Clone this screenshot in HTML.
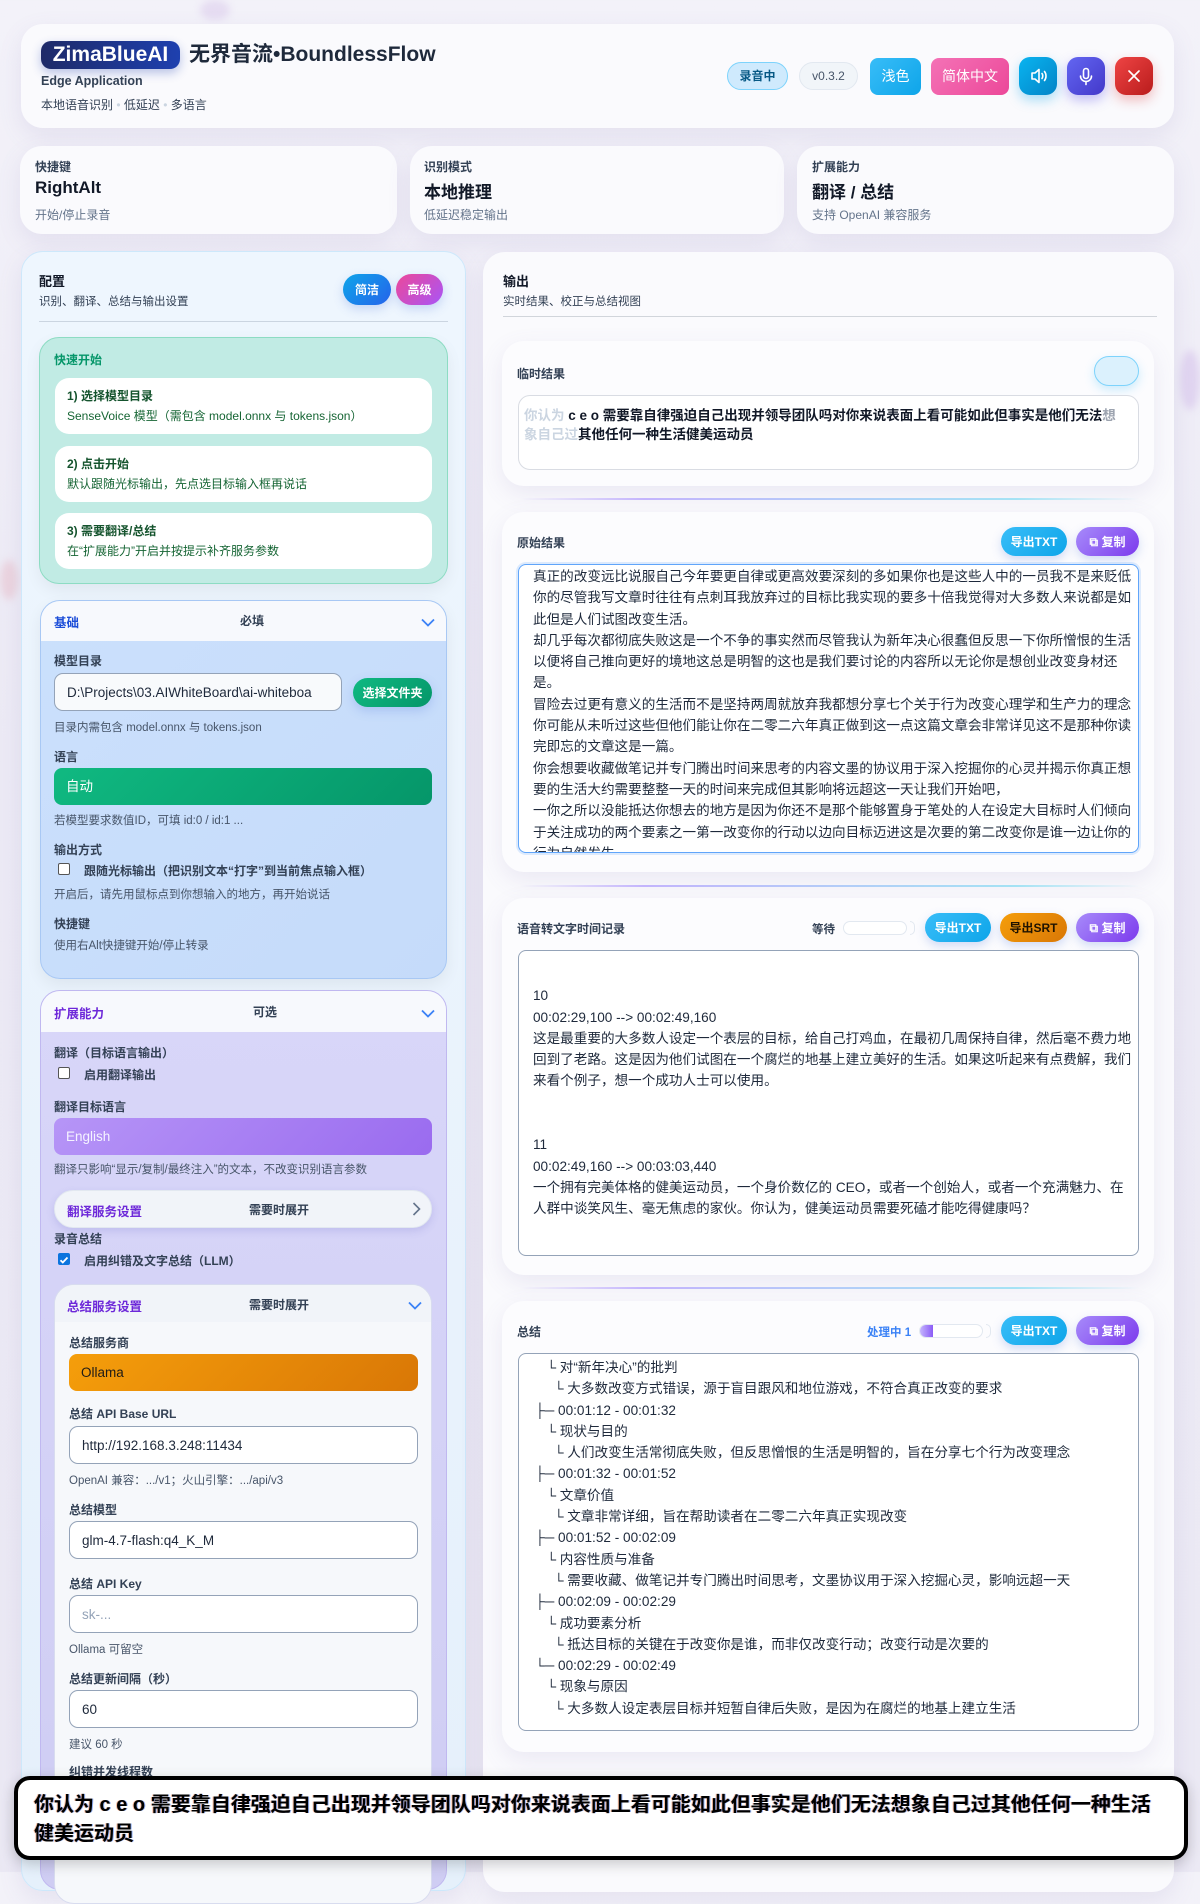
<!DOCTYPE html>
<html><head><meta charset="utf-8"><style>
*{box-sizing:border-box;margin:0;padding:0}
body{width:1200px;height:1872px;overflow:hidden;position:relative;font-family:"Liberation Sans","Noto Sans CJK SC",sans-serif;color:#1e293b;background:linear-gradient(180deg,#f3f2f9 0%,#eceaf5 40%,#ebe9f4 100%)}
.a{position:absolute}
.card{position:absolute;background:rgba(250,250,253,.95);border-radius:22px;box-shadow:0 8px 24px rgba(120,110,170,.12)}
.lbl{position:absolute;font-size:12px;font-weight:bold;color:#334155}
.hint{position:absolute;font-size:11.5px;color:#475569}
.btn{position:absolute;border-radius:999px;color:#fff;font-size:12px;font-weight:bold;display:flex;align-items:center;justify-content:center;box-shadow:0 4px 10px rgba(80,120,220,.25)}
.inp{position:absolute;background:#f8fafc;border:1px solid #94a3b8;border-radius:9px;font-size:13.5px;color:#1e293b;padding-left:12px;display:flex;align-items:center;white-space:nowrap;overflow:hidden}
.ta{position:absolute;background:#fff;border:1px solid #94a3b8;border-radius:8px;font-size:13.6px;line-height:21.3px;color:#1e293b;white-space:pre;overflow:hidden}
.chev{position:absolute;width:14px;height:9px}
</style></head><body>
<div class="a" style="left:200px;top:0;width:30px;height:20px;border-radius:50%;background:#d8c6ea;opacity:.5;filter:blur(4px)"></div>
<div class="a" style="left:1180px;top:350px;width:20px;height:60px;border-radius:50%;background:#d7c4ec;opacity:.6;filter:blur(4px)"></div>
<div class="a" style="left:0;top:560px;width:18px;height:40px;border-radius:50%;background:#e8bcc8;opacity:.5;filter:blur(4px)"></div>

<div class="card" style="left:21px;top:24px;width:1153px;height:104px"></div>
<div class="a" style="left:41px;top:41px;width:139px;height:28px;border-radius:10px;background:linear-gradient(90deg,#1e2a68,#1e40af);box-shadow:0 4px 10px rgba(30,64,175,.3);color:#fff;font-size:21px;font-weight:bold;line-height:28px;text-align:center">ZimaBlueAI</div>
<div class="a" style="left:189px;top:41px;font-size:21px;font-weight:bold;line-height:28px;color:#1e293b">无界音流•BoundlessFlow</div>
<div class="a" style="left:41px;top:74px;font-size:12.5px;font-weight:bold;color:#334155">Edge Application</div>
<div class="a" style="left:41px;top:96px;font-size:12px;color:#334155">本地语音识别 <span style="color:#cbd5e1">•</span> 低延迟 <span style="color:#cbd5e1">•</span> 多语言</div>
<div class="a" style="left:727px;top:62px;width:61px;height:28px;border-radius:14px;background:#cfeafd;border:1px solid #7dd3fc;color:#075985;font-size:12px;font-weight:bold;text-align:center;line-height:26px">录音中</div>
<div class="a" style="left:799px;top:62px;width:59px;height:28px;border-radius:14px;background:#f1f5f9;border:1px solid #e2e8f0;color:#475569;font-size:12px;text-align:center;line-height:26px">v0.3.2</div>
<div class="a" style="left:870px;top:58px;width:51px;height:37px;border-radius:8px;background:linear-gradient(135deg,#38bdf8,#0ea5e9);color:#fff;font-size:14px;text-align:center;line-height:37px">浅色</div>
<div class="a" style="left:931px;top:58px;width:78px;height:37px;border-radius:8px;background:linear-gradient(135deg,#f472b6,#ec4899);color:#fff;font-size:14px;text-align:center;line-height:37px">简体中文</div>
<div class="a" style="left:1019px;top:57px;width:38px;height:38px;border-radius:11px;background:linear-gradient(135deg,#0ab4f0,#0284c7);box-shadow:0 5px 12px rgba(14,165,233,.35)"><svg width="38" height="38" viewBox="0 0 38 38" fill="none" stroke="#fff" stroke-width="1.6" stroke-linejoin="round" stroke-linecap="round"><path d="M13 16h3l4-3.5v13L16 22h-3z"/><path d="M23 16.5c1 1.3 1 3.7 0 5"/><path d="M25.5 14.5c2 2.5 2 6.5 0 9"/></svg></div>
<div class="a" style="left:1067px;top:57px;width:38px;height:38px;border-radius:11px;background:linear-gradient(135deg,#6366f1,#4338ca);box-shadow:0 5px 12px rgba(79,70,229,.35)"><svg width="38" height="38" viewBox="0 0 38 38" fill="none" stroke="#fff" stroke-width="1.6" stroke-linecap="round"><rect x="16.5" y="11.5" width="5" height="10" rx="2.5"/><path d="M13.5 19c0 3.2 2.5 5.5 5.5 5.5s5.5-2.3 5.5-5.5"/><path d="M19 24.5v3"/></svg></div>
<div class="a" style="left:1115px;top:57px;width:38px;height:38px;border-radius:11px;background:linear-gradient(135deg,#ef4444,#b91c1c);box-shadow:0 5px 12px rgba(220,38,38,.3)"><svg width="38" height="38" viewBox="0 0 38 38" stroke="#fff" stroke-width="1.7" stroke-linecap="round"><path d="M14 14l10 10M24 14l-10 10"/></svg></div>

<div class="card" style="left:20px;top:146px;width:377px;height:88px"></div>
<div class="card" style="left:410px;top:146px;width:374px;height:88px"></div>
<div class="card" style="left:797px;top:146px;width:377px;height:88px"></div>
<div class="a" style="left:35px;top:158px;font-size:12px;font-weight:bold;color:#334155">快捷键</div>
<div class="a" style="left:35px;top:178px;font-size:17px;font-weight:bold;color:#111827">RightAlt</div>
<div class="a" style="left:35px;top:206px;font-size:12px;color:#64748b">开始/停止录音</div>
<div class="a" style="left:424px;top:158px;font-size:12px;font-weight:bold;color:#334155">识别模式</div>
<div class="a" style="left:424px;top:178px;font-size:17px;font-weight:bold;color:#111827">本地推理</div>
<div class="a" style="left:424px;top:206px;font-size:12px;color:#64748b">低延迟稳定输出</div>
<div class="a" style="left:812px;top:158px;font-size:12px;font-weight:bold;color:#334155">扩展能力</div>
<div class="a" style="left:812px;top:178px;font-size:17px;font-weight:bold;color:#111827">翻译 / 总结</div>
<div class="a" style="left:812px;top:206px;font-size:12px;color:#64748b">支持 OpenAI 兼容服务</div>

<div class="a" style="left:21px;top:251px;width:445px;height:1640px;border-radius:22px;background:linear-gradient(180deg,#eef6fe,#e5f0fb);border:1px solid #cde8fb;box-shadow:0 8px 24px rgba(120,110,170,.12)"></div>
<div class="a" style="left:39px;top:271px;font-size:13px;font-weight:bold;color:#111827">配置</div>
<div class="a" style="left:39px;top:293px;font-size:11.5px;color:#334155">识别、翻译、总结与输出设置</div>
<div class="btn" style="left:343px;top:274px;width:48px;height:31px;background:linear-gradient(135deg,#0ea5e9,#2563eb)">简洁</div>
<div class="btn" style="left:396px;top:274px;width:47px;height:31px;background:linear-gradient(135deg,#ec4899,#a855f7)">高级</div>
<div class="a" style="left:39px;top:321px;width:409px;height:1px;background:#cbd5e1"></div>

<div class="a" style="left:39px;top:337px;width:409px;height:247px;border-radius:20px;background:#c1ebe4;border:1px solid #8ddcc3;box-shadow:0 6px 16px rgba(0,0,0,.06)"></div>
<div class="a" style="left:54px;top:351px;font-size:12px;font-weight:bold;color:#059669">快速开始</div>
<div class="a" style="left:55px;top:378px;width:377px;height:56px;border-radius:14px;background:#fff"></div>
<div class="a" style="left:55px;top:446px;width:377px;height:56px;border-radius:14px;background:#fff"></div>
<div class="a" style="left:55px;top:513px;width:377px;height:56px;border-radius:14px;background:#fff"></div>
<div class="a" style="left:67px;top:387px;font-size:12px;font-weight:bold;color:#14532d">1) 选择模型目录</div>
<div class="a" style="left:67px;top:407px;font-size:12px;color:#166534">SenseVoice 模型（需包含 model.onnx 与 tokens.json）</div>
<div class="a" style="left:67px;top:455px;font-size:12px;font-weight:bold;color:#14532d">2) 点击开始</div>
<div class="a" style="left:67px;top:475px;font-size:12px;color:#166534">默认跟随光标输出，先点选目标输入框再说话</div>
<div class="a" style="left:67px;top:522px;font-size:12px;font-weight:bold;color:#14532d">3) 需要翻译/总结</div>
<div class="a" style="left:67px;top:542px;font-size:12px;color:#166534">在“扩展能力”开启并按提示补齐服务参数</div>

<div class="a" style="left:40px;top:600px;width:407px;height:379px;border-radius:20px;background:linear-gradient(135deg,#cbe0fc,#c5dbfa);border:1px solid #a8c8f4;overflow:hidden;box-shadow:0 6px 16px rgba(0,0,0,.06)"><div style="height:40px;background:#f7f9fd"></div></div>
<div class="a" style="left:54px;top:612px;font-size:12.5px;font-weight:bold;color:#1d4ed8">基础</div>
<div class="a" style="left:240px;top:612px;font-size:12px;font-weight:bold;color:#334155">必填</div>
<svg class="chev" style="left:421px;top:618px" viewBox="0 0 14 9"><path d="M1 1.5l6 6 6-6" fill="none" stroke="#3b82f6" stroke-width="1.8"/></svg>
<div class="lbl" style="left:54px;top:652px">模型目录</div>
<div class="inp" style="left:54px;top:673px;width:288px;height:38px">D:\Projects\03.AIWhiteBoard\ai-whiteboa</div>
<div class="btn" style="left:353px;top:678px;width:79px;height:29px;background:linear-gradient(135deg,#10b981,#059669)">选择文件夹</div>
<div class="hint" style="left:54px;top:719px">目录内需包含 model.onnx 与 tokens.json</div>
<div class="lbl" style="left:54px;top:748px">语言</div>
<div class="a" style="left:54px;top:768px;width:378px;height:37px;border-radius:8px;background:linear-gradient(135deg,#10b981,#059669);color:#fff;font-size:13.5px;line-height:37px;padding-left:12px">自动</div>
<div class="hint" style="left:54px;top:812px">若模型要求数值ID，可填 id:0 / id:1 ...</div>
<div class="lbl" style="left:54px;top:841px">输出方式</div>
<div class="a" style="left:58px;top:863px;width:12px;height:12px;border:1px solid #555;border-radius:2px;background:#fff"></div>
<div class="lbl" style="left:84px;top:862px">跟随光标输出（把识别文本“打字”到当前焦点输入框）</div>
<div class="hint" style="left:54px;top:886px">开启后，请先用鼠标点到你想输入的地方，再开始说话</div>
<div class="lbl" style="left:54px;top:915px">快捷键</div>
<div class="hint" style="left:54px;top:937px">使用右Alt快捷键开始/停止转录</div>

<div class="a" style="left:40px;top:990px;width:407px;height:900px;border-radius:20px;background:linear-gradient(180deg,#d8d6f9,#cfcdf3);border:1px solid #c0b8f0;overflow:hidden"><div style="height:41px;background:#f7f9fd"></div></div>
<div class="a" style="left:54px;top:1003px;font-size:12.5px;font-weight:bold;color:#6d28d9">扩展能力</div>
<div class="a" style="left:253px;top:1003px;font-size:12px;font-weight:bold;color:#334155">可选</div>
<svg class="chev" style="left:421px;top:1009px" viewBox="0 0 14 9"><path d="M1 1.5l6 6 6-6" fill="none" stroke="#3b82f6" stroke-width="1.8"/></svg>
<div class="lbl" style="left:54px;top:1044px">翻译（目标语言输出）</div>
<div class="a" style="left:58px;top:1067px;width:12px;height:12px;border:1px solid #555;border-radius:2px;background:#fff"></div>
<div class="lbl" style="left:84px;top:1066px">启用翻译输出</div>
<div class="lbl" style="left:54px;top:1098px">翻译目标语言</div>
<div class="a" style="left:54px;top:1118px;width:378px;height:37px;border-radius:8px;background:linear-gradient(135deg,#b695f7,#9a6bef);color:#f5f3ff;font-size:13.5px;line-height:37px;padding-left:12px">English</div>
<div class="hint" style="left:54px;top:1161px">翻译只影响“显示/复制/最终注入”的文本，不改变识别语言参数</div>
<div class="a" style="left:54px;top:1190px;width:378px;height:38px;border-radius:19px;background:#f1f4f9;border:1px solid #e2e8f0;box-shadow:0 3px 8px rgba(100,100,200,.2)"></div>
<div class="a" style="left:67px;top:1201px;font-size:12.5px;font-weight:bold;color:#6d28d9">翻译服务设置</div>
<div class="a" style="left:249px;top:1201px;font-size:12px;font-weight:bold;color:#334155">需要时展开</div>
<svg class="a" style="left:412px;top:1202px" width="9" height="14" viewBox="0 0 9 14"><path d="M1.5 1l6 6-6 6" fill="none" stroke="#64748b" stroke-width="1.6"/></svg>
<div class="lbl" style="left:54px;top:1230px">录音总结</div>
<div class="a" style="left:58px;top:1253px;width:12px;height:12px;border-radius:2px;background:#0b74de"><svg width="12" height="12" viewBox="0 0 12 12"><path d="M2.5 6.2l2.3 2.3 4.7-5" fill="none" stroke="#fff" stroke-width="1.8"/></svg></div>
<div class="lbl" style="left:84px;top:1252px">启用纠错及文字总结（LLM）</div>

<div class="a" style="left:54px;top:1284px;width:378px;height:620px;border-radius:20px;background:#f6f8fb;border:1px solid #d8dcef;overflow:hidden"><div style="height:37px;background:#f1f4f9"></div></div>
<div class="a" style="left:67px;top:1296px;font-size:12.5px;font-weight:bold;color:#6d28d9">总结服务设置</div>
<div class="a" style="left:249px;top:1296px;font-size:12px;font-weight:bold;color:#334155">需要时展开</div>
<svg class="chev" style="left:408px;top:1301px" viewBox="0 0 14 9"><path d="M1 1.5l6 6 6-6" fill="none" stroke="#3b82f6" stroke-width="1.8"/></svg>
<div class="lbl" style="left:69px;top:1334px">总结服务商</div>
<div class="a" style="left:69px;top:1354px;width:349px;height:37px;border-radius:8px;background:linear-gradient(135deg,#f59e0b,#d97706);color:#1e1b16;font-size:13.5px;line-height:37px;padding-left:12px">Ollama</div>
<div class="lbl" style="left:69px;top:1405px">总结 API Base URL</div>
<div class="inp" style="left:69px;top:1426px;width:349px;height:38px;background:#fff">http://192.168.3.248:11434</div>
<div class="hint" style="left:69px;top:1472px">OpenAI 兼容：.../v1；火山引擎：.../api/v3</div>
<div class="lbl" style="left:69px;top:1501px">总结模型</div>
<div class="inp" style="left:69px;top:1521px;width:349px;height:38px;background:#fff">glm-4.7-flash:q4_K_M</div>
<div class="lbl" style="left:69px;top:1575px">总结 API Key</div>
<div class="inp" style="left:69px;top:1595px;width:349px;height:38px;background:#fff;color:#94a3b8">sk-...</div>
<div class="hint" style="left:69px;top:1641px">Ollama 可留空</div>
<div class="lbl" style="left:69px;top:1670px">总结更新间隔（秒）</div>
<div class="inp" style="left:69px;top:1690px;width:349px;height:38px;background:#fff">60</div>
<div class="hint" style="left:69px;top:1736px">建议 60 秒</div>
<div class="lbl" style="left:69px;top:1763px">纠错并发线程数</div>

<div class="a" style="left:483px;top:252px;width:691px;height:1640px;border-radius:22px;background:rgba(250,250,253,.96);box-shadow:0 8px 24px rgba(120,110,170,.12)"></div>
<div class="a" style="left:503px;top:271px;font-size:13px;font-weight:bold;color:#111827">输出</div>
<div class="a" style="left:503px;top:293px;font-size:11.5px;color:#334155">实时结果、校正与总结视图</div>
<div class="a" style="left:503px;top:316px;width:654px;height:1px;background:#d1d5db"></div>

<div class="card" style="left:502px;top:341px;width:652px;height:145px;background:#fcfcfe"></div>
<div class="a" style="left:517px;top:365px;font-size:12px;font-weight:bold;color:#334155">临时结果</div>
<div class="a" style="left:1094px;top:356px;width:45px;height:30px;border-radius:15px;background:#dbf1fd;border:1px solid #7dd3fc;box-shadow:0 4px 10px rgba(56,189,248,.25)"></div>
<div class="a" style="left:518px;top:395px;width:621px;height:75px;border-radius:12px;background:#fff;border:1px solid #d9dce3"></div>
<div class="a" style="left:524px;top:406px;width:600px;font-size:13.5px;font-weight:bold;line-height:19px;color:#111827"><span style="color:#cbd5e1">你认为</span> c e o 需要靠自律强迫自己出现并领导团队吗对你来说表面上看可能如此但事实是他们无法<span style="color:#9ca3af">想</span><br><span style="color:#cbd5e1">象自己过</span>其他任何一种生活健美运动员</div>
<div class="a" style="left:520px;top:498px;width:620px;height:2px;background:linear-gradient(90deg,rgba(196,181,253,0),#c4b5fd 20%,#a5e3f5 80%,rgba(165,227,245,0))"></div>

<div class="card" style="left:502px;top:512px;width:652px;height:360px;background:#fcfcfe"></div>
<div class="a" style="left:517px;top:534px;font-size:12px;font-weight:bold;color:#334155">原始结果</div>
<div class="btn" style="left:1001px;top:527px;width:66px;height:29px;background:linear-gradient(135deg,#38bdf8,#0ea5e9)">导出TXT</div>
<div class="btn" style="left:1076px;top:527px;width:63px;height:29px;background:linear-gradient(135deg,#a78bfa,#7c3aed)">⧉ 复制</div>
<div class="ta" style="left:518px;top:564px;width:621px;height:289px;border:1.5px solid #60a5fa;box-shadow:0 0 0 2px rgba(96,165,250,.2);padding:1px 0 0 14px">真正的改变远比说服自己今年要更自律或更高效要深刻的多如果你也是这些人中的一员我不是来贬低
你的尽管我写文章时往往有点刺耳我放弃过的目标比我实现的要多十倍我觉得对大多数人来说都是如
此但是人们试图改变生活。
却几乎每次都彻底失败这是一个不争的事实然而尽管我认为新年决心很蠢但反思一下你所憎恨的生活
以便将自己推向更好的境地这总是明智的这也是我们要讨论的内容所以无论你是想创业改变身材还
是。
冒险去过更有意义的生活而不是坚持两周就放弃我都想分享七个关于行为改变心理学和生产力的理念
你可能从未听过这些但他们能让你在二零二六年真正做到这一点这篇文章会非常详见这不是那种你读
完即忘的文章这是一篇。
你会想要收藏做笔记并专门腾出时间来思考的内容文墨的协议用于深入挖掘你的心灵并揭示你真正想
要的生活大约需要整整一天的时间来完成但其影响将远超这一天让我们开始吧，
一你之所以没能抵达你想去的地方是因为你还不是那个能够置身于笔处的人在设定大目标时人们倾向
于关注成功的两个要素之一第一改变你的行动以边向目标迈进这是次要的第二改变你是谁一边让你的
行为自然发生</div>
<div class="a" style="left:520px;top:885px;width:620px;height:2px;background:linear-gradient(90deg,rgba(196,181,253,0),#c4b5fd 20%,#a5e3f5 80%,rgba(165,227,245,0))"></div>

<div class="card" style="left:502px;top:898px;width:652px;height:377px;background:#fcfcfe"></div>
<div class="a" style="left:517px;top:920px;font-size:12px;font-weight:bold;color:#334155">语音转文字时间记录</div>
<div class="a" style="left:812px;top:921px;font-size:11.5px;font-weight:bold;color:#334155">等待</div>
<div class="a" style="left:843px;top:921px;width:64px;height:14px;border-radius:7px;background:#fff;border:1px solid #e2e8f0"></div>
<div class="a" style="left:910px;top:921px;width:5px;height:14px;border-radius:0 7px 7px 0;border:1px solid #e2e8f0;border-left:none"></div>
<div class="btn" style="left:925px;top:913px;width:66px;height:29px;background:linear-gradient(135deg,#38bdf8,#0ea5e9)">导出TXT</div>
<div class="btn" style="left:1000px;top:913px;width:67px;height:29px;background:linear-gradient(135deg,#f59e0b,#d97706);color:#1f1300">导出SRT</div>
<div class="btn" style="left:1076px;top:913px;width:63px;height:29px;background:linear-gradient(135deg,#a78bfa,#7c3aed)">⧉ 复制</div>
<div class="ta" style="left:518px;top:950px;width:621px;height:306px;padding:13px 0 0 14px"> 
10
00:02:29,100 --&gt; 00:02:49,160
这是最重要的大多数人设定一个表层的目标，给自己打鸡血，在最初几周保持自律，然后毫不费力地
回到了老路。这是因为他们试图在一个腐烂的地基上建立美好的生活。如果这听起来有点费解，我们
来看个例子，想一个成功人士可以使用。


11
00:02:49,160 --&gt; 00:03:03,440
一个拥有完美体格的健美运动员，一个身价数亿的 CEO，或者一个创始人，或者一个充满魅力、在
人群中谈笑风生、毫无焦虑的家伙。你认为，健美运动员需要死磕才能吃得健康吗？</div>
<div class="a" style="left:520px;top:1287px;width:620px;height:2px;background:linear-gradient(90deg,rgba(196,181,253,0),#c4b5fd 20%,#a5e3f5 80%,rgba(165,227,245,0))"></div>

<div class="card" style="left:502px;top:1301px;width:652px;height:451px;background:#fcfcfe"></div>
<div class="a" style="left:517px;top:1323px;font-size:12px;font-weight:bold;color:#334155">总结</div>
<div class="a" style="left:867px;top:1324px;font-size:11.5px;font-weight:bold;color:#3b82f6">处理中 1</div>
<div class="a" style="left:919px;top:1324px;width:64px;height:14px;border-radius:7px;background:#fff;border:1px solid #e2e8f0;overflow:hidden"><div style="width:13px;height:14px;background:linear-gradient(90deg,#c4b5fd,#8b5cf6)"></div></div>
<div class="a" style="left:986px;top:1324px;width:5px;height:14px;border-radius:0 7px 7px 0;border:1px solid #e2e8f0;border-left:none"></div>
<div class="btn" style="left:1001px;top:1316px;width:66px;height:29px;background:linear-gradient(135deg,#38bdf8,#0ea5e9)">导出TXT</div>
<div class="btn" style="left:1076px;top:1316px;width:63px;height:29px;background:linear-gradient(135deg,#a78bfa,#7c3aed)">⧉ 复制</div>
<div class="ta" style="left:518px;top:1353px;width:621px;height:378px;padding:3px 0 0 16px">   └ 对“新年决心”的批判
     └ 大多数改变方式错误，源于盲目跟风和地位游戏，不符合真正改变的要求
├─ 00:01:12 - 00:01:32
   └ 现状与目的
     └ 人们改变生活常彻底失败，但反思憎恨的生活是明智的，旨在分享七个行为改变理念
├─ 00:01:32 - 00:01:52
   └ 文章价值
     └ 文章非常详细，旨在帮助读者在二零二六年真正实现改变
├─ 00:01:52 - 00:02:09
   └ 内容性质与准备
     └ 需要收藏、做笔记并专门腾出时间思考，文墨协议用于深入挖掘心灵，影响远超一天
├─ 00:02:09 - 00:02:29
   └ 成功要素分析
     └ 抵达目标的关键在于改变你是谁，而非仅改变行动；改变行动是次要的
└─ 00:02:29 - 00:02:49
   └ 现象与原因
     └ 大多数人设定表层目标并短暂自律后失败，是因为在腐烂的地基上建立生活</div>

<div class="a" style="left:14px;top:1776px;width:1174px;height:84px;background:#fff;border:4px solid #000;border-radius:16px;box-shadow:0 4px 14px rgba(0,0,0,.2)"></div>
<div class="a" style="left:34px;top:1791px;width:1150px;font-size:20px;font-weight:bold;line-height:29px;color:#000;white-space:nowrap;text-shadow:1px 0 0 rgba(37,99,235,.5),-1px 0 0 rgba(234,88,12,.4)">你认为 c e o 需要靠自律强迫自己出现并领导团队吗对你来说表面上看可能如此但事实是他们无法想象自己过其他任何一种生活<br>健美运动员</div>
</body></html>
